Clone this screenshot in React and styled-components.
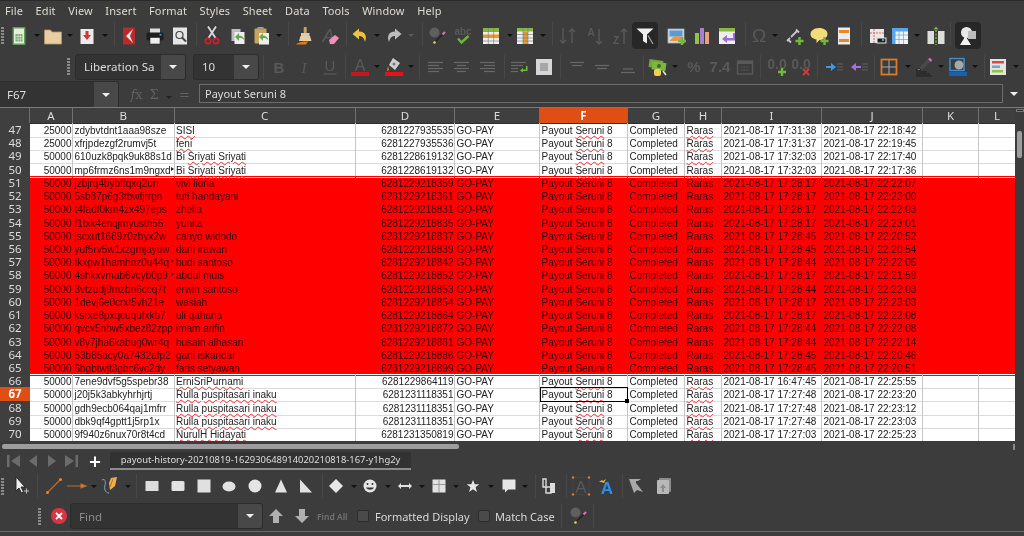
import React from 'react';
import styled, { createGlobalStyle } from 'styled-components';

const GlobalStyle = createGlobalStyle`
  html, body { margin: 0; padding: 0; background: #3c3c3c; overflow: hidden; }
  #root { width: 1024px; height: 536px; }
`;

const uiFont = `"Noto Sans", "Open Sans", sans-serif`;

const Window = styled.div`
  width: 1024px;
  height: 536px;
  display: flex;
  flex-direction: column;
  overflow: hidden;
  background: #3c3c3c;
  color: #dfdbd2;
  font-family: ${uiFont};
  filter: blur(0.3px);
`;

const MenuBar = styled.div`
  height: 22px;
  flex: none;
  box-sizing: border-box;
  border-top: 1px solid #2a2a2a;
  padding: 0 0 2px 5px;
  display: flex;
  align-items: center;
  gap: 12.6px;
  font-size: 11px;
  letter-spacing: 0.1px;
`;

const ToolRow = styled.div`
  height: ${({ $h }) => $h}px;
  flex: none;
  display: flex;
  align-items: ${({ $top }) => ($top ? 'flex-start' : 'center')};
  padding-left: ${({ $pad }) => $pad || 0}px;
`;

const Grip = styled.div`
  width: 3px;
  height: 17px;
  flex: none;
  margin-top: ${({ $mt }) => $mt || 0}px;
  margin-right: ${({ $gap }) => $gap || 0}px;
  background: repeating-linear-gradient(to bottom, #8a8a8a 0 2px, transparent 2px 3px);
`;

const Tool = styled.div`
  width: ${({ $w }) => $w}px;
  height: 27px;
  flex: none;
  display: flex;
  align-items: center;
  justify-content: center;
  border-radius: 4px;
  background: ${({ $on }) => ($on ? '#272727' : 'transparent')};
`;

const Arrow = styled.span`
  width: 0;
  height: 0;
  display: inline-block;
  border-left: ${({ $big }) => ($big ? 4 : 3)}px solid transparent;
  border-right: ${({ $big }) => ($big ? 4 : 3)}px solid transparent;
  border-top: ${({ $big }) => ($big ? 4 : 3)}px solid ${({ $color }) => $color || '#111'};
`;

const Sep = styled.div`
  width: ${({ $w }) => $w}px;
  height: 24px;
  flex: none;
  display: flex;
  justify-content: center;
  &::before {
    content: '';
    width: 1px;
    background: #484848;
  }
`;

const Glyph = styled.svg`
  width: 20px;
  height: 20px;
  flex: none;
  overflow: visible;
`;

const Combo = styled.div`
  width: ${({ $w }) => $w}px;
  height: 26px;
  flex: none;
  box-sizing: border-box;
  margin-left: ${({ $ml }) => $ml || 0}px;
  display: flex;
  border: 1px solid #2c2c2c;
  border-radius: 3px;
  background: #333333;
  font-size: 11.5px;
  overflow: hidden;
`;

const ComboText = styled.div`
  flex: 1;
  display: flex;
  align-items: center;
  padding-left: ${({ $pad }) => $pad || 8}px;
  white-space: nowrap;
  overflow: hidden;
  color: ${({ $muted }) => ($muted ? '#8c8c8c' : '#dcdcdc')};
`;

const ComboButton = styled.div`
  width: 24px;
  flex: none;
  display: flex;
  align-items: center;
  justify-content: center;
  background: #484848;
`;

const FormulaRow = styled.div`
  height: 28px;
  flex: none;
  box-sizing: border-box;
  border-bottom: 1px solid #7a7a7a;
  display: flex;
  align-items: flex-end;
`;

const NameBox = styled(Combo)`
  border-radius: 0 3px 0 0;
  border-bottom: 0;
  border-left: 0;
`;

const FormulaIcons = styled.div`
  width: 80px;
  height: 26px;
  flex: none;
  box-sizing: border-box;
  padding-left: 5px;
  display: flex;
  align-items: center;
  color: #626262;
  font-size: 13px;
`;

const FormulaSign = styled.span`
  width: ${({ $w }) => $w}px;
  flex: none;
  text-align: center;
  font-family: "DejaVu Serif", serif;
`;

const FormulaInput = styled.div`
  width: 804px;
  height: 19px;
  flex: none;
  box-sizing: border-box;
  margin-bottom: 4px;
  padding-left: 5px;
  border: 1px solid #6c6c6c;
  background: #393939;
  font-size: 11px;
  line-height: 17px;
  color: #dcdcdc;
`;

const FormulaEnd = styled.div`
  flex: 1;
  height: 23px;
  display: flex;
  align-items: center;
  justify-content: center;
  padding-bottom: 4px;
  box-sizing: border-box;
`;

const SheetArea = styled.div`
  height: 333px;
  flex: none;
  display: flex;
  overflow: hidden;
`;

const Sheet = styled.div`
  width: 1015px;
  flex: none;
  overflow: hidden;
`;

const columns = '30px 43px 101.5px 181.5px 99px 85px 88px 57px 37px 100px 101px 56px 37px';

const HeaderRow = styled.div`
  display: grid;
  grid-template-columns: ${columns};
  height: 15px;
`;

const ColHead = styled.div`
  box-sizing: border-box;
  border-right: 1px solid #707070;
  border-bottom: 1px solid #2e2e2e;
  background: ${({ $on }) => ($on ? '#df4e14' : '#3f3f3f')};
  color: ${({ $on }) => ($on ? '#ffffff' : '#dcdcdc')};
  font-size: 11.5px;
  font-weight: ${({ $on }) => ($on ? 700 : 400)};
  line-height: 15px;
  text-align: center;
`;

const Row = styled.div`
  display: grid;
  grid-template-columns: ${columns};
  height: 13.22px;
  background: ${({ $red }) => ($red ? '#ff0000' : '#ffffff')};
  color: ${({ $red }) => ($red ? '#300000' : '#222222')};
  font-family: "Liberation Sans", Arial, sans-serif;
  font-size: 10px;
  line-height: 13px;
`;

const RowHead = styled.div`
  box-sizing: border-box;
  padding-top: 1px;
  border-bottom: 1px solid #6c6c6c;
  background: ${({ $on }) => ($on ? '#df4e14' : '#3f3f3f')};
  color: ${({ $on }) => ($on ? '#ffffff' : '#dcdcdc')};
  font-family: ${uiFont};
  font-size: 11.5px;
  font-weight: ${({ $on }) => ($on ? 700 : 400)};
  line-height: 12px;
  text-align: center;
`;

const Cell = styled.div`
  position: relative;
  box-sizing: border-box;
  padding: 1px 0.5px 0 1.5px;
  white-space: nowrap;
  text-align: ${({ $right }) => ($right ? 'right' : 'left')};
  border-right: 1px solid ${({ $red }) => ($red ? '#ff0000' : '#c6c6c6')};
  border-bottom: 1px solid ${({ $red }) => ($red ? '#ff0000' : '#dcdcdc')};
  overflow-x: ${({ $selected }) => ($selected ? 'visible' : 'clip')};
  overflow-y: visible;
  outline: ${({ $selected }) => ($selected ? '1.5px solid #000' : 'none')};
  outline-offset: -1px;
  z-index: ${({ $selected }) => ($selected ? 1 : 0)};

  ${({ $more }) => $more && `
    &::before {
      content: '';
      position: absolute;
      top: 4px;
      right: 0;
      border-left: 3px solid #222;
      border-top: 2px solid transparent;
      border-bottom: 2px solid transparent;
    }
  `}

  ${({ $selected }) => $selected && `
    &::after {
      content: '';
      position: absolute;
      right: -2px;
      bottom: -2px;
      width: 4px;
      height: 4px;
      background: #000;
    }
  `}
`;

const Squiggle = styled.span`
  text-decoration: underline wavy #ee3038 1px;
  text-underline-offset: 1px;
`;

const VScroll = styled.div`
  flex: 1;
  display: flex;
  flex-direction: column;
  align-items: center;
`;

const SplitHandle = styled.div`
  width: 8px;
  height: 3px;
  flex: none;
  margin-top: 1px;
  border: 1px solid #777;
  box-sizing: border-box;
  background: #2c2c2c;
`;

const VThumb = styled.div`
  width: 5px;
  height: 27px;
  margin-top: 19px;
  border-radius: 2px;
  background: #9d9d9d;
`;

const HScroll = styled.div`
  height: 9px;
  flex: none;
  padding: 3px 0 0 2px;
  box-sizing: border-box;
  display: flex;
  justify-content: space-between;
`;

const HThumb = styled.div`
  width: 457px;
  height: 5px;
  border-radius: 2px;
  background: #9d9d9d;
`;

const HEnd = styled.div`
  width: 2px;
  height: 6px;
  margin-right: 9px;
  background: #8a8a8a;
`;

const TabBar = styled.div`
  height: 21px;
  flex: none;
  padding-left: 4px;
  display: flex;
  align-items: center;
`;

const TabNav = styled.div`
  width: 19px;
  flex: none;
  display: flex;
  justify-content: center;
`;

const AddTab = styled.div`
  width: 30px;
  flex: none;
  text-align: center;
  font-size: 21px;
  font-weight: 600;
  line-height: 20px;
  color: #ffffff;
`;

const Tab = styled.div`
  width: 301px;
  height: 18px;
  flex: none;
  box-sizing: border-box;
  border-bottom: 2px solid #8c8c8c;
  background: #323232;
  text-align: center;
  font-size: 9.4px;
  line-height: 16px;
  color: #dddddd;
  white-space: nowrap;
`;

const DimLabel = styled.div`
  width: 42px;
  flex: none;
  font-size: 8.5px;
  font-weight: 600;
  color: #737373;
  white-space: nowrap;
  padding-left: 2px;
  box-sizing: border-box;
`;

const CheckBox = styled.div`
  width: 12px;
  height: 12px;
  flex: none;
  box-sizing: border-box;
  border: 1px solid #2c2c2c;
  border-radius: 2px;
  background: #4a4a4a;
  margin-right: ${({ $gap }) => $gap}px;
`;

const CheckLabel = styled.div`
  width: ${({ $w }) => $w}px;
  flex: none;
  font-size: 11px;
  color: #d8d8d8;
  white-space: nowrap;
`;

const Footer = styled.div`
  flex: 1;
  border-top: 1px solid #6a6a6a;
`;

// helper pieces for the icons
const dim = '#595959';
const Lines = ({ rows, color = '#686868' }) => (
  <g stroke={color} strokeWidth="1.2">
    {rows.map(([x1, x2, y]) => <line key={`${x1}${y}`} x1={x1} x2={x2} y1={y} y2={y} />)}
  </g>
);
const Plus = ({ x = 15, y = 15 }) => (
  <path d={`M${x - 1.2} ${y - 4}h2.4v2.8h2.8v2.4h-2.8v2.8h-2.4v-2.8h-2.8v-2.4h2.8z`} fill="#74b83a" />
);
const Label = ({ x = 10, y = 15, size = 14, color = dim, weight = 400, family = 'Liberation Sans', style, children }) => (
  <text x={x} y={y} textAnchor="middle" fontSize={size} fill={color} fontWeight={weight} fontFamily={family} fontStyle={style}>{children}</text>
);
const GreenArrow = () => (
  <path d="M7 11l4-4v2.5c3 0 5 2 5.5 5-1.5-2-3-2.5-5.5-2.5V15z" fill="#6aa84f" />
);

const icons = {
  newDoc: (
    <>
      <rect x="3.5" y="1" width="13" height="18" rx="1" fill="#5f9e55" />
      <rect x="5" y="2.5" width="10" height="15" fill="#e6ece0" />
      <rect x="6.5" y="8" width="7" height="7.5" fill="#79ab69" />
      <path d="M6.5 10.5h7M6.5 13h7M9 8v7.5M11.3 8v7.5" stroke="#e6ece0" strokeWidth=".6" />
    </>
  ),
  open: <path d="M1.5 4h6l1.5 2h9.5v12h-17z" fill="#e7cfa1" stroke="#b49768" strokeWidth=".8" />,
  exportDoc: (
    <>
      <rect x="3.5" y="3" width="13" height="15" fill="#ececec" />
      <path d="M8.5 5h3v4h2.5l-4 5-4-5h2.5z" fill="#d5372f" />
    </>
  ),
  pdf: (
    <>
      <rect x="4" y="1.5" width="12" height="17" fill="#b82b2b" />
      <path d="M14 3L7 10l7 7-3-7z" fill="#efe3e0" />
    </>
  ),
  print: (
    <>
      <rect x="5" y="2.5" width="10" height="5" fill="#dddddd" />
      <rect x="1.5" y="6.5" width="17" height="8" rx="1.5" fill="#1e1e1e" />
      <rect x="5" y="11.5" width="10" height="6.5" fill="#efefef" stroke="#222" strokeWidth=".6" />
      <rect x="14.5" y="8" width="2" height="1.6" fill="#3aa0e0" />
    </>
  ),
  preview: (
    <>
      <rect x="3" y="1.5" width="14" height="17" fill="#e6e6e6" />
      <circle cx="9.5" cy="9" r="3.5" fill="none" stroke="#444" strokeWidth="1.2" />
      <path d="M12 11.5l4 4" stroke="#444" strokeWidth="2" />
    </>
  ),
  cut: (
    <>
      <path d="M6.5 12L14 .5M13.5 12L6 .5" stroke="#dddddd" strokeWidth="1.8" />
      <circle cx="6" cy="15" r="2.6" fill="none" stroke="#c9222a" strokeWidth="1.8" />
      <circle cx="14" cy="15" r="2.6" fill="none" stroke="#c9222a" strokeWidth="1.8" />
    </>
  ),
  copy: (
    <>
      <rect x="3.5" y="3" width="9" height="12" fill="#bdbdbd" />
      <rect x="6.5" y="6" width="10" height="12" fill="#eeeeee" />
      <GreenArrow />
    </>
  ),
  paste: (
    <>
      <rect x="2.5" y="2.5" width="12" height="15" rx="1" fill="#c9a35f" />
      <rect x="5.5" y="1" width="6" height="3" fill="#9c9c9c" />
      <rect x="7" y="7" width="10" height="11.5" fill="#eeeeee" />
      <GreenArrow />
    </>
  ),
  clone: (
    <>
      <rect x="8.7" y="1" width="3" height="6.5" rx="1" fill="#c9a35f" />
      <rect x="6" y="7" width="8.5" height="3" fill="#cccccc" />
      <path d="M5.5 10h9.5l1.5 5H4z" fill="#e9cf9f" />
      <path d="M1 18.5c2-2.5 8-3 12-3l-2 3z" fill="#e27a1d" />
    </>
  ),
  clear: (
    <>
      <Label x={8.5} y={16} size={18} style="italic">A</Label>
      <path d="M9 14l6-5 4 3-5 6H10z" fill="#f08fb8" />
    </>
  ),
  undo: <path d="M9 2.5L2.5 8 9 13.5V10c3 0 5 1.5 6 6 2-5 1-10.5-6-10.5z" fill="#efc23f" />,
  redo: <path d="M11 2.5L17.5 8 11 13.5V10c-3 0-5 1.5-6 6-2-5-1-10.5 6-10.5z" fill="#bdbdbd" />,
  find: (
    <>
      <circle cx="7.5" cy="6.5" r="5" fill="#5f5f5f" />
      <path d="M9 15l8-8" stroke="#222" strokeWidth="1.6" />
      <path d="M15.5 8.5L18 6" stroke="#e86fb0" strokeWidth="2" />
      <circle cx="7.5" cy="16.5" r="1.3" fill="#e8d24a" />
    </>
  ),
  spell: (
    <>
      <Label y={9} size={10} weight={700}>abc</Label>
      <path d="M5 12.5l3.5 4 7-6.5" fill="none" stroke="#6fb23a" strokeWidth="2.4" />
    </>
  ),
  tableRow: (
    <>
      <rect x="2" y="2" width="16" height="16" fill="#eeeeee" />
      <rect x="2" y="2" width="16" height="3.5" fill="#86b943" />
      <rect x="2" y="8.5" width="16" height="3.5" fill="#e89a2c" />
      <path d="M7.3 2v16M12.6 2v16M2 5.5h16M2 15h16" stroke="#777" strokeWidth=".6" />
    </>
  ),
  tableCol: (
    <>
      <rect x="2" y="2" width="16" height="16" fill="#eeeeee" />
      <rect x="2" y="2" width="16" height="3.5" fill="#86b943" />
      <rect x="8" y="5.5" width="5" height="12.5" fill="#e89a2c" />
      <path d="M8 2v16M13 2v16M2 8.5h16M2 12h16M2 15h16" stroke="#777" strokeWidth=".6" />
    </>
  ),
  sort: <path d="M5 2v15M2 14l3 3 3-3M14 17V3M11 6l3-3 3 3" fill="none" stroke={dim} strokeWidth="1.4" />,
  sortAsc: (
    <>
      <Label x={6} y={10} size={10} weight={700}>A</Label>
      <path d="M14 3v15M11 15l3 3 3-3" fill="none" stroke={dim} strokeWidth="1.4" />
    </>
  ),
  sortDesc: (
    <>
      <Label x={6} y={18} size={10} weight={700}>Z</Label>
      <path d="M14 18V3M11 6l3-3 3 3" fill="none" stroke={dim} strokeWidth="1.4" />
    </>
  ),
  filter: (
    <>
      <path d="M1.5 2.5h17l-6.5 6v9l-4-2.5V8.5z" fill="#f0f0f0" />
      <path d="M13 9.5l5 8.5" stroke="#aaaaaa" strokeWidth="1.2" />
    </>
  ),
  image: (
    <>
      <rect x="2" y="3" width="16" height="14" fill="#d4dbe6" stroke="#a7b2c2" strokeWidth=".8" />
      <rect x="3.5" y="4.5" width="13" height="6" fill="#5b9ad6" />
      <path d="M3.5 15l4-4.5h9V15z" fill="#e69a3a" />
      <Plus x={16} y={15} />
    </>
  ),
  chart: (
    <>
      <rect x="3" y="7" width="4" height="11" fill="#8ec641" />
      <rect x="8" y="2" width="4" height="16" fill="#a97fd4" />
      <rect x="13" y="6" width="4" height="12" fill="#ea9e84" />
    </>
  ),
  pivot: (
    <>
      <rect x="2" y="2" width="16" height="16" fill="#eeeeee" />
      <rect x="2" y="2" width="16" height="3.5" fill="#86b943" />
      <path d="M16 7v5H10V9l-5 4 5 4v-2.5h8V7z" fill="#9a6fd0" />
    </>
  ),
  omega: <Label y={16} size={19}>Ω</Label>,
  link: (
    <>
      <path d="M3 15l3-3M10 8l3-3M12 3.5l3 3M4 13.5l3 3M7 11l5-5" fill="none" stroke="#c8c8c8" strokeWidth="1.8" />
      <Plus x={15.5} y={15} />
    </>
  ),
  comment: (
    <>
      <path d="M10 2c5 0 8.5 2.5 8.5 6s-4 6-8 6l-3 3v-3.5C4 13 1.5 11 1.5 8S5 2 10 2z" fill="#f4dc7c" />
      <Plus x={15.5} y={15} />
    </>
  ),
  header: (
    <>
      <rect x="4" y="1.5" width="12" height="17" fill="#ececec" />
      <rect x="5" y="4" width="10" height="3" fill="#e8872a" />
      <rect x="5" y="13" width="10" height="3" fill="#e8872a" />
    </>
  ),
  freeze: (
    <>
      <rect x="3" y="3" width="14" height="14" fill="#e8e8e8" />
      <path d="M3 7h14M7 3v14" stroke="#d55" strokeWidth=".9" strokeDasharray="2 1" />
      <rect x="10" y="12" width="9" height="5" fill="#222" stroke="#e8e8e8" />
      <rect x="15" y="13" width="2" height="2" fill="#3aa0e0" />
    </>
  ),
  tableBlue: (
    <>
      <rect x="2" y="2" width="16" height="16" fill="#f0f4fa" />
      <rect x="2" y="2" width="16" height="3.5" fill="#5aa4e8" />
      <rect x="2" y="2" width="3.5" height="16" fill="#5aa4e8" />
      <path d="M9 2v16M13.5 2v16M2 9h16M2 13.5h16" stroke="#5aa4e8" strokeWidth=".7" />
    </>
  ),
  split: (
    <>
      <rect x="1.5" y="5" width="6.5" height="13" fill="#dddddd" />
      <rect x="12" y="5" width="6.5" height="13" fill="#dddddd" />
      <path d="M10 4v15" stroke="#74b83a" strokeWidth="1.4" strokeDasharray="2 1.5" />
      <path d="M7.5 3.5L10 .5l2.5 3z" fill="#74b83a" />
    </>
  ),
  shapes: (
    <>
      <circle cx="8.5" cy="6.5" r="5.5" fill="#e8e8e8" />
      <rect x="10" y="5" width="8" height="8" fill="#bcbcbc" />
      <path d="M7.5 10l5.5 9H2z" fill="#f2f2f2" />
    </>
  ),
  bold: <Label y={16} size={15} weight={700}>B</Label>,
  italic: <Label y={16} size={15} style="italic" family="Liberation Serif">I</Label>,
  underline: (
    <>
      <Label y={14} size={15}>U</Label>
      <path d="M3.5 17h13" stroke={dim} strokeWidth="1.2" />
    </>
  ),
  fontColor: (
    <>
      <Label y={14} size={16}>A</Label>
      <rect x="1" y="15" width="18" height="4" fill="#c8161d" />
    </>
  ),
  bgColor: (
    <>
      <path d="M9 1l7 5-5 7-6-5z" fill="#cfcfcf" />
      <circle cx="10" cy="7" r="1.5" fill="#777" />
      <path d="M4 9l1 4-2 1z" fill="#e8872a" />
      <rect x="1" y="15" width="18" height="4" fill="#e8101a" />
    </>
  ),
  alignLeft: <Lines rows={[[2, 17, 5.5], [2, 13, 8.5], [2, 17, 11.5], [2, 13, 14.5]]} />,
  alignCenter: <Lines rows={[[2, 17, 5.5], [5, 14, 8.5], [2, 17, 11.5], [5, 14, 14.5]]} />,
  alignRight: <Lines rows={[[3, 18, 5.5], [7, 18, 8.5], [3, 18, 11.5], [7, 18, 14.5]]} />,
  wrap: (
    <>
      <Lines rows={[[1, 16, 5.5], [1, 13, 8.5], [1, 8, 11.5], [1, 8, 14.5]]} />
      <path d="M10 13.5l3-2.5v1.5h3V9h1.5v5H13v1.5z" fill="#74b83a" />
    </>
  ),
  merge: (
    <>
      <rect x="2" y="2" width="16" height="16" fill="#d6d6d6" />
      <rect x="6" y="6" width="8" height="8" fill="#a6a6a6" />
    </>
  ),
  vTop: <Lines rows={[[3, 17, 5.5], [5, 15, 8.5]]} />,
  vMid: <Lines rows={[[3, 17, 8.5], [5, 15, 11.5]]} />,
  vBot: <Lines rows={[[5, 15, 12], [3, 17, 15.5]]} />,
  money: (
    <>
      <rect x="1" y="3" width="14" height="8" fill="#6fa53a" transform="rotate(8 8 7)" />
      <rect x="4" y="5" width="14" height="8" fill="#7eb544" transform="rotate(8 10 9)" />
      <circle cx="11" cy="9" r="2" fill="#3f6d1d" />
      <rect x="6" y="12" width="7" height="7" rx="2" fill="#ecd24f" />
      <path d="M15 14l3 4" stroke="#efe3c0" strokeWidth="1.5" />
    </>
  ),
  percent: <Label y={15} size={15} weight={700}>%</Label>,
  number: <Label y={15} size={15} weight={700}>7.4</Label>,
  date: (
    <>
      <rect x="2.5" y="4" width="15" height="13" fill="none" stroke={dim} strokeWidth="1.4" />
      <rect x="2.5" y="4" width="15" height="3" fill={dim} />
      <path d="M6 10h8M6 13h8" stroke={dim} strokeDasharray="1.5 1" />
    </>
  ),
  decAdd: (
    <>
      <Label y={12} size={14} weight={700}>0.0</Label>
      <Plus x={15} y={15} />
    </>
  ),
  decDel: (
    <>
      <Label y={12} size={14} weight={700}>0.0</Label>
      <path d="M12 12l6 6M18 12l-6 6" stroke="#d03a3a" strokeWidth="2" />
    </>
  ),
  indent: (
    <>
      <path d="M2 9h5V6l5 4-5 4v-3H2z" fill="#3f9be0" />
      <Lines rows={[[13, 19, 7], [13, 19, 10], [13, 19, 13]]} color={dim} />
    </>
  ),
  outdent: (
    <>
      <path d="M12 9H7V6l-5 4 5 4v-3h5z" fill="#a56fe0" />
      <Lines rows={[[13, 19, 7], [13, 19, 10], [13, 19, 13]]} color={dim} />
    </>
  ),
  border: (
    <>
      <rect x="2.5" y="2.5" width="15" height="15" fill="none" stroke="#db7a2a" strokeWidth="1.8" />
      <path d="M10 3v14M3 10h14" stroke="#aaaaaa" strokeWidth="1" />
    </>
  ),
  lineStyle: (
    <>
      <path d="M5 11l9-9 3 2-9 9z" fill="#4a4a4a" />
      <path d="M14 2l2-1 2 2-1 2z" fill="#e86fb0" />
      <path d="M2 13l3-2 2 2zM2 15h11M2 17h14M2 19h16" stroke="#1b1b1b" fill="#e8d24a" strokeWidth=".9" />
    </>
  ),
  borderColor: (
    <>
      <rect x="2" y="1.5" width="14" height="12" fill="none" stroke="#3f8fd0" strokeWidth="1.4" />
      <circle cx="11" cy="8" r="4.5" fill="#a8a8a8" />
      <rect x="1" y="15" width="18" height="4" fill="#1f5fa8" />
    </>
  ),
  conditional: (
    <>
      <rect x="2" y="2" width="16" height="16" fill="#e3e3e3" />
      <rect x="4" y="4" width="12" height="2.5" fill="#d84a4a" />
      <rect x="4" y="8.5" width="8" height="2.5" fill="#6aa8dc" />
      <rect x="4" y="13" width="11" height="2.5" fill="#8ec641" />
    </>
  ),
  cursor: (
    <>
      <path d="M5 1v14l3-3 2.5 5 2-1-2.5-5H14z" fill="#f0f0f0" stroke="#222" strokeWidth=".9" />
      <path d="M13 15h5M15.5 12.5v5" stroke="#bbbbbb" />
    </>
  ),
  line: (
    <>
      <path d="M3 17L17 3" stroke="#c06a22" strokeWidth="1.2" />
      <circle cx="3.5" cy="16.5" r="1.5" fill="#e8872a" />
      <circle cx="16.5" cy="3.5" r="1.5" fill="#e8872a" />
    </>
  ),
  arrowLine: <path d="M0 10h14v-2l5 2-5 2v-2" stroke="#c06a22" fill="#e8872a" strokeWidth="1.1" />,
  curve: (
    <>
      <path d="M1 4c3-2 4 2 3 5s0 8 4 8" fill="none" stroke="#7fa8c8" strokeWidth="1" />
      <path d="M10 2l6-1-2 9-5 4-1-7z" fill="#efb24a" />
      <path d="M12 3l-3 8" stroke="#8a5a20" strokeWidth=".7" />
    </>
  ),
  rect: <rect x="3.5" y="5" width="13" height="10" fill="#dddddd" />,
  rectRound: <rect x="3.5" y="5" width="13" height="10" rx="1.5" fill="#e2e2e2" />,
  square: <rect x="3.5" y="3.5" width="13" height="13" fill="#e0e0e0" />,
  ellipse: <ellipse cx="10" cy="10.5" rx="6.5" ry="5" fill="#e2e2e2" />,
  circle: <circle cx="10" cy="10" r="6.5" fill="#e4e4e4" />,
  triangle: <path d="M10 3.5l6 13H4z" fill="#e2e2e2" />,
  rightTriangle: <path d="M4 3.5l12 13H4z" fill="#e2e2e2" />,
  diamond: <path d="M10 3l7 7-7 7-7-7z" fill="#e6e6e6" />,
  smiley: (
    <>
      <circle cx="10" cy="10" r="6.5" fill="#e6e6e6" />
      <circle cx="7.5" cy="8" r="1" fill="#333" />
      <circle cx="12.5" cy="8" r="1" fill="#333" />
      <path d="M6 11.5c1.5 3 6.5 3 8 0z" fill="#333" />
    </>
  ),
  doubleArrow: <path d="M3 10l3-3v2h8V7l3 3-3 3v-2H6v2z" fill="#e2e2e2" />,
  flow: (
    <>
      <rect x="3.5" y="3.5" width="13" height="13" fill="#e2e2e2" />
      <path d="M3.5 8.5h13M10 3.5v13" stroke="#888" strokeWidth=".8" />
    </>
  ),
  star: <path d="M10 4l1.7 4.3h4.5l-3.6 3 1.3 4.7L10 13.3 6.1 16l1.3-4.7-3.6-3h4.5z" fill="#e8e8e8" />,
  callout: <path d="M3.5 3.5h13v10H9l-3 3v-3H3.5z" fill="#e6e6e6" />,
  points: (
    <>
      <path d="M4 3h3v8h5v6H7v-6H4z" fill="none" stroke="#dddddd" strokeWidth="1.4" />
      <rect x="11" y="7" width="5" height="10" fill="#dddddd" />
    </>
  ),
  fontwork: (
    <>
      <Label y={16.5} size={17}>A</Label>
      <path d="M2 1.5h16v17H2z" fill="none" stroke="#4c4c4c" strokeWidth=".5" />
      <g fill="#e0772a">
        <circle cx="2" cy="1.5" r="1.2" />
        <circle cx="18" cy="1.5" r="1.2" />
        <circle cx="2" cy="18.5" r="1.2" />
        <circle cx="18" cy="18.5" r="1.2" />
      </g>
    </>
  ),
  fontworkBlue: (
    <>
      <Label x={11} y={18} size={17} color="#2f8fe6" weight={700}>A</Label>
      <path d="M3 6l3-2 1 1 3-2-2 4-3-1z" fill="#e8b23a" />
    </>
  ),
  extrusion: <path d="M2 3h12l-3 2H9v2l7 9-6-2-3 3z" fill="#a8a8a8" />,
  shadow: (
    <>
      <rect x="5" y="2" width="12" height="14" rx="1" fill="#8c8c8c" />
      <rect x="3" y="4" width="12" height="14" rx="1" fill="#b8b8b8" />
      <path d="M9 8l3 4h-2v4H8v-4H6z" fill="#8c8c8c" />
    </>
  ),
  close: (
    <>
      <circle cx="10" cy="10" r="8" fill="#d9343f" />
      <path d="M7 7l6 6M13 7l-6 6" stroke="#ffffff" strokeWidth="1.8" />
    </>
  ),
  up: <path d="M10 3l7 7h-4v7H7v-7H3z" fill="#b0b0b0" />,
  down: <path d="M7 3h6v7h4l-7 7-7-7h4z" fill="#b0b0b0" />,
  first: <path d="M3 4h2.5v12H3zM16 4v12l-9-6z" fill="#6b6b6b" />,
  prev: <path d="M14 4v12l-8-6z" fill="#6b6b6b" />,
  next: <path d="M6 4v12l8-6z" fill="#6b6b6b" />,
  last: <path d="M4 4v12l9-6zM14.5 4H17v12h-2.5z" fill="#6b6b6b" />,
};

const Icon = ({ name }) => <Glyph viewBox="0 0 20 20">{icons[name]}</Glyph>;

// [kind, width] in the order they sit on the bar
const renderTools = (list) => list.map(([name, w, on], i) => {
  if (name === 'sep') return <Sep key={i} $w={w} />;
  if (name === 'dd') return <Tool key={i} $w={w}><Arrow $color={on ? '#5a5a5a' : '#111'} /></Tool>;
  return <Tool key={i} $w={w} $on={on}><Icon name={name} /></Tool>;
});

const standardTools = [
  ['newDoc', 26], ['dd', 10], ['open', 22], ['dd', 12], ['exportDoc', 22], ['dd', 14], ['sep', 4],
  ['pdf', 26], ['print', 26], ['preview', 24], ['sep', 8], ['cut', 24], ['copy', 28], ['paste', 20],
  ['dd', 14], ['sep', 4], ['clone', 30], ['clear', 20], ['sep', 12], ['undo', 16], ['dd', 18],
  ['redo', 16], ['dd', 18, true], ['sep', 4], ['find', 26], ['spell', 26], ['tableRow', 30], ['dd', 8],
  ['tableCol', 22], ['dd', 14], ['sep', 4], ['sort', 28], ['sortAsc', 25], ['sortDesc', 25],
  ['filter', 26, true], ['image', 36], ['chart', 16], ['pivot', 34], ['sep', 2], ['omega', 26],
  ['dd', 6], ['link', 32], ['comment', 18], ['header', 32], ['sep', 2], ['freeze', 30],
  ['tableBlue', 16], ['dd', 18], ['split', 20], ['sep', 9], ['shapes', 26, true],
];

const formatTools = [
  ['sep', 8], ['bold', 24], ['italic', 25], ['underline', 27], ['sep', 4], ['fontColor', 26], ['dd', 8],
  ['bgColor', 26], ['dd', 8], ['sep', 8], ['alignLeft', 26], ['alignCenter', 25], ['alignRight', 26],
  ['sep', 8], ['wrap', 24], ['merge', 24], ['sep', 8], ['vTop', 25], ['vMid', 25], ['vBot', 27],
  ['sep', 5], ['money', 24], ['dd', 10], ['percent', 27], ['number', 25], ['date', 25], ['sep', 6],
  ['decAdd', 27], ['decDel', 22], ['sep', 10], ['indent', 24], ['outdent', 26], ['sep', 5],
  ['border', 24], ['dd', 14], ['lineStyle', 18], ['dd', 16], ['borderColor', 18], ['dd', 16], ['sep', 2],
  ['conditional', 26], ['dd', 10],
];

const drawTools = [
  ['cursor', 22], ['sep', 10], ['line', 24], ['arrowLine', 22], ['dd', 12], ['curve', 22], ['dd', 12],
  ['sep', 5], ['rect', 26], ['rectRound', 26], ['square', 26], ['ellipse', 24], ['circle', 28],
  ['triangle', 24], ['rightTriangle', 26], ['sep', 6], ['diamond', 22], ['dd', 14], ['smiley', 18],
  ['dd', 18], ['doubleArrow', 16], ['dd', 18], ['flow', 16], ['dd', 18], ['star', 16], ['dd', 20],
  ['callout', 15], ['dd', 18], ['sep', 2], ['points', 26], ['sep', 8], ['fontwork', 22],
  ['fontworkBlue', 28], ['sep', 4], ['extrusion', 26], ['shadow', 28],
];

const letters = ['A', 'B', 'C', 'D', 'E', 'F', 'G', 'H', 'I', 'J', 'K', 'L'];

const rows = [
  [47, 25000, 'zdybvtdnt1aaa98sze', 'SISI', '6281227935535', '17:31:38', '22:18:42'],
  [48, 25000, 'xfrjpdezgf2rumvj5t', 'feni', '6281227935536', '17:31:37', '22:19:45'],
  [49, 50000, '610uzk8pqk9uk88s1d', 'Bi Sriyati Sriyati', '6281228619132', '17:32:03', '22:17:40'],
  [50, 50000, 'mp6frmz6ns1m9ngxd', 'Bi Sriyati Sriyati', '6281228619132', '17:32:03', '22:17:36'],
  [51, 50000, 'jzbjrq4bybftqxq2un', 'vivi liona', '6281229218359', '17:28:17', '22:22:07'],
  [52, 50000, '5sb87p6g3tbwfjrrgn', 'tuti handayani', '6281229218361', '17:28:17', '22:23:00'],
  [53, 50000, 't4fadf0km4zx497eps', 'zhelia', '6281229218831', '17:28:17', '22:22:03'],
  [54, 50000, 'f1txk4enqjmyusth55', 'yunita', '6281229218835', '17:28:17', '22:23:01'],
  [55, 50000, 'jscxut1689z0zbyx2w', 'cahyo widodo', '6281229218837', '17:28:45', '22:20:52'],
  [56, 50000, 'yuf5rv5w1xzgmjayuw', 'dani irawan', '6281229218839', '17:28:45', '22:20:54'],
  [57, 50000, 'tkxgw1hamhnz0u44q', 'budi santoso', '6281229218842', '17:28:44', '22:22:05'],
  [58, 50000, '4shkxvmab6vcyb0p9', 'abdul muis', '6281229218852', '17:28:17', '22:21:59'],
  [59, 50000, '3vtzudj9mzbn6ccq7t', 'erwin santoso', '6281229218853', '17:28:44', '22:22:03'],
  [60, 50000, '1devj6e0crxt5vh21e', 'wasiah', '6281229218854', '17:28:17', '22:23:03'],
  [61, 50000, 'ksrxe8pxqcuqufxkb7', 'uli qahana', '6281229218864', '17:28:17', '22:22:08'],
  [62, 50000, 'qvcx5nbw5xbez82zpp', 'imam arifin', '6281229218872', '17:28:44', '22:22:08'],
  [63, 50000, 'v8y7jha6kabug0wr4q', 'husain alhasan', '6281229218881', '17:28:44', '22:22:14'],
  [64, 50000, '53b85acy0a7432afp2', 'gani iskandar', '6281229218886', '17:28:45', '22:20:46'],
  [65, 50000, '6bgbtwjt3gbc6yc2dy', 'faris setyawan', '6281229218899', '17:28:45', '22:20:51'],
  [66, 50000, '7ene9dvf5g5spebr38', 'ErniSriPurnami', '6281229864119', '16:47:45', '22:25:55'],
  [67, 50000, 'j20j5k3abkyhrhjrtj', 'Rulla puspitasari inaku', '6281231118351', '17:27:48', '22:23:20'],
  [68, 50000, 'gdh9ecb064qaj1mfrr', 'Rulla puspitasari inaku', '6281231118351', '17:27:48', '22:23:12'],
  [69, 50000, 'dbk9qf4gptt1j5rp1x', 'Rulla puspitasari inaku', '6281231118351', '17:27:48', '22:23:03'],
  [70, 50000, '9f940z6nux70r8t4cd', 'NurulH Hidayati', '6281231350819', '17:27:03', '22:25:23'],
];

const clippedCodes = [50, 57, 58];
const menus = ['File', 'Edit', 'View', 'Insert', 'Format', 'Styles', 'Sheet', 'Data', 'Tools', 'Window', 'Help'];

const SheetRow = ({ data }) => {
  const [no, amount, code, name, phone, start, end] = data;
  const red = no >= 51 && no <= 65;
  const current = no === 67;
  const nameCell = name.startsWith('Bi ')
    ? <>Bi <Squiggle>Sriyati Sriyati</Squiggle></>
    : <Squiggle>{name}</Squiggle>;

  return (
    <Row $red={red}>
      <RowHead $on={current}>{no}</RowHead>
      <Cell $red={red} $right>{amount}</Cell>
      <Cell $red={red} $more={clippedCodes.includes(no)}>{code}</Cell>
      <Cell $red={red}>{red ? name : nameCell}</Cell>
      <Cell $red={red} $right>{phone}</Cell>
      <Cell $red={red}>GO-PAY</Cell>
      <Cell $red={red} $selected={current}>Payout {red ? 'Seruni' : <Squiggle>Seruni</Squiggle>} 8</Cell>
      <Cell $red={red}>Completed</Cell>
      <Cell $red={red}>{red ? 'Raras' : <Squiggle>Raras</Squiggle>}</Cell>
      <Cell $red={red}>2021-08-17 {start}</Cell>
      <Cell $red={red}>2021-08-17 {end}</Cell>
      <Cell $red={red} />
      <Cell $red={red} />
    </Row>
  );
};

const App = () => (
  <Window>
    <GlobalStyle />
    <MenuBar>
      {menus.map((m) => <span key={m}>{m}</span>)}
    </MenuBar>

    <ToolRow $h={31} $pad={1} $top>
      <Grip $gap={2} $mt={5} />
      {renderTools(standardTools)}
    </ToolRow>

    <ToolRow $h={27} $pad={67}>
      <Grip $gap={5} />
      <Combo $w={111}>
        <ComboText>Liberation Sa</ComboText>
        <ComboButton><Arrow $big $color="#eeeeee" /></ComboButton>
      </Combo>
      <Combo $w={66} $ml={7}>
        <ComboText>10</ComboText>
        <ComboButton><Arrow $big $color="#eeeeee" /></ComboButton>
      </Combo>
      {renderTools(formatTools)}
    </ToolRow>

    <FormulaRow>
      <NameBox $w={119}>
        <ComboText $pad={7}>F67</ComboText>
        <ComboButton><Arrow $big $color="#eeeeee" /></ComboButton>
      </NameBox>
      <FormulaIcons>
        <FormulaSign $w={25}><i>f</i>x</FormulaSign>
        <FormulaSign $w={10}>Σ</FormulaSign>
        <FormulaSign $w={20}><Arrow $color="#222" /></FormulaSign>
        <FormulaSign $w={8}>=</FormulaSign>
      </FormulaIcons>
      <FormulaInput>Payout Seruni 8</FormulaInput>
      <FormulaEnd><Arrow $big $color="#eeeeee" /></FormulaEnd>
    </FormulaRow>

    <SheetArea>
      <Sheet>
        <HeaderRow>
          <ColHead />
          {letters.map((l) => <ColHead key={l} $on={l === 'F'}>{l}</ColHead>)}
        </HeaderRow>
        {rows.map((r) => <SheetRow key={r[0]} data={r} />)}
        <Row>
          <RowHead />
          {letters.map((l) => <Cell key={l} />)}
        </Row>
      </Sheet>
      <VScroll>
        <SplitHandle />
        <VThumb />
      </VScroll>
    </SheetArea>

    <HScroll>
      <HThumb />
      <HEnd />
    </HScroll>

    <TabBar>
      <TabNav><Icon name="first" /></TabNav>
      <TabNav><Icon name="prev" /></TabNav>
      <TabNav><Icon name="next" /></TabNav>
      <TabNav><Icon name="last" /></TabNav>
      <AddTab>+</AddTab>
      <Tab>payout-history-20210819-162930648914020210818-167-y1hg2y</Tab>
    </TabBar>

    <ToolRow $h={30} $pad={1}>
      <Grip $gap={6} />
      {renderTools(drawTools)}
    </ToolRow>

    <ToolRow $h={30} $pad={38}>
      <Grip $gap={7} />
      <Tool $w={22}><Icon name="close" /></Tool>
      <Combo $w={193}>
        <ComboText $muted>Find</ComboText>
        <ComboButton><Arrow $big $color="#eeeeee" /></ComboButton>
      </Combo>
      <Tool $w={26}><Icon name="up" /></Tool>
      <Tool $w={26}><Icon name="down" /></Tool>
      <DimLabel>Find All</DimLabel>
      <CheckBox $gap={6} />
      <CheckLabel $w={103}>Formatted Display</CheckLabel>
      <CheckBox $gap={5} />
      <CheckLabel $w={62}>Match Case</CheckLabel>
      <Sep $w={8} />
      <Tool $w={26}><Icon name="find" /></Tool>
      <Sep $w={4} />
    </ToolRow>

    <Footer />
  </Window>
);

export default App;
